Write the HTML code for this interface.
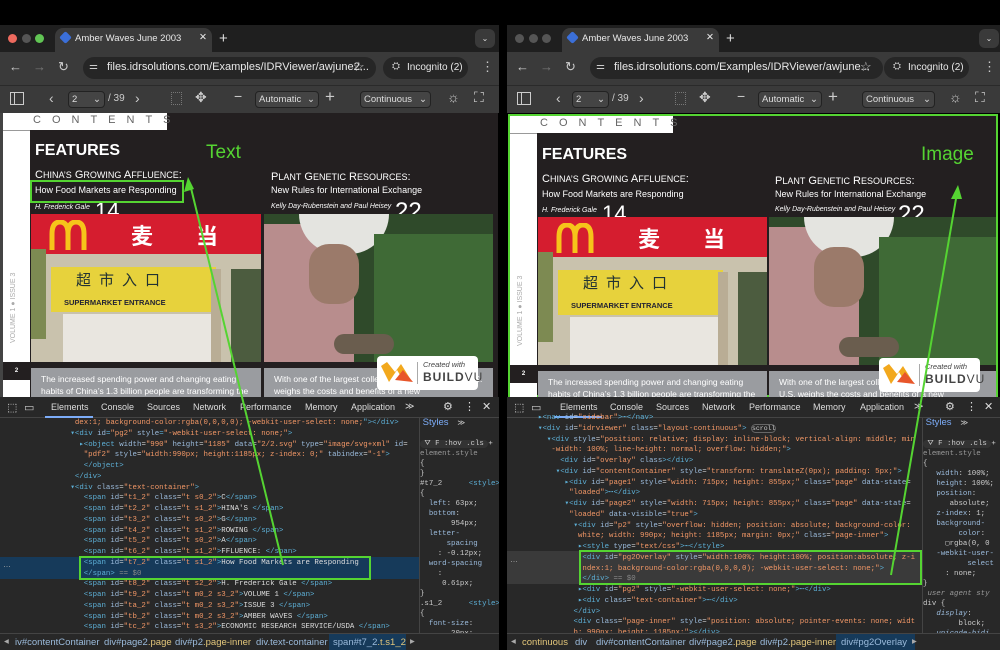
<!DOCTYPE html>
<html><head><meta charset="utf-8">
<style>
*{margin:0;padding:0;box-sizing:border-box}
body{width:1000px;height:650px;background:#000;position:relative;overflow:hidden;font-family:"Liberation Sans",sans-serif}
.p{position:absolute;top:0;height:650px;overflow:hidden}
.a{position:absolute}
.tabs{top:25px;left:0;width:500px;height:27px;background:#1f1f1f}
.tab{top:28px;left:55px;width:157px;height:24px;background:#3a3a3a;border-radius:8px 8px 0 0;color:#e8e8e8;font-size:9.5px;padding:5px 0 0 20px}
.addr{top:52px;left:0;width:500px;height:33px;background:#3a3a3a}
.url{top:57px;left:83px;width:293px;height:22px;background:#262626;border-radius:11px;color:#e8e8e8;font-size:11px;padding:4px 0 0 24px;white-space:nowrap;overflow:hidden}
.inc{top:57px;left:383px;width:85px;height:22px;background:#262626;border-radius:11px;color:#e8e8e8;font-size:10px;padding:5px 0 0 24px}
.tb{top:85px;left:0;width:500px;height:28px;background:#3a3a3a;border-top:1px solid #2a2a2a}
.sel{height:17px;background:#444;border:1px solid #222;border-radius:4px;color:#ddd;font-size:9.5px;padding:2px 0 0 3px}
.ic{color:#ccc;font-size:14px}
.page{top:113px;left:0;width:498px;height:284px;background:#231f20;border-left:3px solid #444}
.dt{top:397px;left:0;width:500px;height:253px;background:#282828}
.dtab{top:397px;left:0;width:500px;height:21px;background:#282828;border-bottom:1px solid #444;color:#ddd;font-size:9px}
.code{font-family:"Liberation Mono",monospace;font-size:7.4px;line-height:10.75px;white-space:pre;color:#ccc}
.t{color:#5db0d7}.n{color:#9bbbdc}.v{color:#f29766}.w{color:#ddd}
.sty{top:418px;left:419px;width:81px;height:215px;border-left:1px solid #444;background:#282828;font-family:"Liberation Mono",monospace;font-size:7.4px;line-height:10px;color:#ccc;white-space:pre;overflow:hidden}
.bc{top:633px;left:0;width:500px;height:17px;background:#282828;border-top:1px solid #444;color:#9bbbdc;font-size:9.5px;white-space:nowrap}
.gray{background:#9a9ca0;color:#fff;font-family:"Liberation Sans",sans-serif;font-size:8.5px;line-height:12px;padding:5px 10px}
</style></head><body>

<!-- ============ LEFT PANEL ============ -->
<div class="p" style="left:0;width:499px">
<div class="a tabs"></div>
<div class="a" style="top:34px;left:8px;width:9px;height:9px;border-radius:50%;background:#ed6a5e"></div>
<div class="a" style="top:34px;left:22px;width:9px;height:9px;border-radius:50%;background:#555"></div>
<div class="a" style="top:34px;left:35px;width:9px;height:9px;border-radius:50%;background:#61c554"></div>
<div class="a tab">Amber Waves June 2003<span style="position:absolute;left:144px;top:4px">✕</span></div>
<div class="a" style="top:33px;left:61px;width:9px;height:9px;background:#3b6fd8;border-radius:2px;transform:rotate(45deg)"></div>
<div class="a" style="top:30px;left:219px;color:#ddd;font-size:15px">+</div>
<div class="a" style="top:29px;left:475px;width:20px;height:19px;background:#3a3a3a;border-radius:6px;color:#ddd;font-size:8px;text-align:center;padding-top:5px">⌄</div>
<div class="a addr"></div>
<div class="a" style="top:59px;left:9px;color:#ccc;font-size:13px">←</div>
<div class="a" style="top:59px;left:33px;color:#777;font-size:13px">→</div>
<div class="a" style="top:59px;left:58px;color:#ccc;font-size:13px">↻</div>
<div class="a url">files.idrsolutions.com/Examples/IDRViewer/awjune2...</div>
<div class="a" style="top:61px;left:89px;color:#ccc;font-size:10px">⚌</div>
<div class="a" style="top:59px;left:353px;color:#ccc;font-size:13px">☆</div>
<div class="a inc">Incognito (2)</div>
<div class="a" style="top:61px;left:392px;color:#ccc;font-size:10px">⛭</div>
<div class="a" style="top:59px;left:481px;color:#ccc;font-size:13px">⋮</div>
<div class="a tb"></div>
<div class="a" style="top:92px;left:10px;width:14px;height:13px;border:1.5px solid #ccc"><div style="width:4px;height:100%;border-right:1.5px solid #ccc"></div></div>
<div class="a ic" style="top:90px;left:49px">‹</div>
<div class="a sel" style="top:91px;left:68px;width:37px">2<span style="float:right;margin-right:3px">⌄</span></div>
<div class="a" style="top:93px;left:108px;color:#ccc;font-size:10px">/ 39</div>
<div class="a ic" style="top:90px;left:135px">›</div>
<div class="a" style="top:92px;left:171px;width:11px;height:13px;border:1px dotted #777"></div>
<div class="a ic" style="top:89px;left:195px">✥</div>
<div class="a ic" style="top:88px;left:234px">−</div>
<div class="a sel" style="top:91px;left:255px;width:64px">Automatic<span style="float:right;margin-right:3px">⌄</span></div>
<div class="a ic" style="top:87px;left:325px;font-size:17px">+</div>
<div class="a sel" style="top:91px;left:360px;width:71px">Continuous<span style="float:right;margin-right:3px">⌄</span></div>
<div class="a ic" style="top:89px;left:447px">☼</div>
<div class="a ic" style="top:89px;left:474px">⛶</div>

<div class="a page">
 <div class="a" style="left:0;top:0;width:27px;height:284px;background:#fff"></div>
 <div class="a" style="left:27px;top:0;width:137px;height:17px;background:#fff;color:#666;font-size:11px;letter-spacing:11px;padding:1px 0 0 3px">CONTENTS</div>
 <div class="a" style="left:0;top:17px;width:27px;height:1px;background:#999"></div>
 <div class="a" style="left:32px;top:29px;color:#fff;font-weight:bold;font-size:16px">FEATURES</div>
 <div class="a" style="left:32px;top:56px;color:#fff;font-size:11px">C<span style="font-size:9px">HINA’S</span> G<span style="font-size:9px">ROWING</span> A<span style="font-size:9px">FFLUENCE</span>:</div>
 <div class="a" style="left:32px;top:72px;color:#fff;font-size:9px">How Food Markets are Responding</div>
 <div class="a" style="left:32px;top:91px;color:#fff;font-size:7px;font-style:italic">H. Frederick Gale</div>
 <div class="a" style="left:92px;top:85px;color:#fff;font-size:22px">14</div>
 <div class="a" style="left:268px;top:58px;color:#fff;font-size:11px">P<span style="font-size:9px">LANT</span> G<span style="font-size:9px">ENETIC</span> R<span style="font-size:9px">ESOURCES</span>:</div>
 <div class="a" style="left:268px;top:72px;color:#fff;font-size:9px">New Rules for International Exchange</div>
 <div class="a" style="left:268px;top:90px;color:#fff;font-size:7px;font-style:italic">Kelly Day-Rubenstein and Paul Heisey</div>
 <div class="a" style="left:392px;top:85px;color:#fff;font-size:24px">22</div>
 <div class="a" style="left:28px;top:101px;width:230px;height:148px;background:#c9c2ad;overflow:hidden">
  <div class="a" style="left:0;top:0;width:230px;height:40px;background:#d51d2f"></div>
  <svg class="a" style="left:18px;top:6px" width="40" height="30"><path d="M3,30 V14 Q3,2 11,2 Q19,2 19,14 V30 M19,14 Q19,2 27,2 Q35,2 35,14 V30" stroke="#f6c41a" stroke-width="5" fill="none"/></svg>
  <div class="a" style="left:100px;top:5px;color:#fff;font-size:22px;font-family:'Noto Sans CJK SC',sans-serif;font-weight:bold">麦</div>
  <div class="a" style="left:165px;top:5px;color:#fff;font-size:22px;font-family:'Noto Sans CJK SC',sans-serif;font-weight:bold">当</div>
  <div class="a" style="left:20px;top:53px;width:165px;height:45px;background:#e7d23c"></div>
  <div class="a" style="left:45px;top:55px;color:#233;font-size:15px;font-family:'Noto Sans CJK SC',sans-serif;letter-spacing:8px">超市入口</div>
  <div class="a" style="left:33px;top:84px;color:#223;font-size:7.5px;font-weight:bold">SUPERMARKET ENTRANCE</div>
  <div class="a" style="left:32px;top:100px;width:150px;height:48px;background:#e9e6e0"></div>
  <div class="a" style="left:180px;top:55px;width:10px;height:93px;background:#b9ad95"></div>
  <div class="a" style="left:200px;top:55px;width:30px;height:93px;background:#4c5c3f"></div>
  <div class="a" style="left:0;top:35px;width:15px;height:90px;background:#7d8a52"></div>
 </div>
 <div class="a" style="left:261px;top:101px;width:229px;height:148px;background:#2f4a2a;overflow:hidden">
  <div class="a" style="left:0;top:10px;width:90px;height:138px;background:#b88d8d"></div>
  <div class="a" style="left:35px;top:0;width:90px;height:40px;background:#e4e4e0;border-radius:0 0 40px 40px"></div>
  <div class="a" style="left:45px;top:30px;width:50px;height:60px;background:#9b7a6a;border-radius:20px"></div>
  <div class="a" style="left:110px;top:20px;width:119px;height:128px;background:#3f6a36"></div>
  <div class="a" style="left:70px;top:120px;width:60px;height:20px;background:#6a5d4e;border-radius:10px"></div>
 </div>
 <div class="a" style="left:27px;top:249px;width:463px;height:6px;background:#231f20"></div>
 <div class="a" style="left:0;top:249px;width:27px;height:18px;background:#231f20;color:#fff;font-size:6px;text-align:center;padding-top:6px;font-weight:bold">2</div>
 <div class="a" style="left:7px;top:230px;color:#aaa;font-size:7px;transform:rotate(-90deg);transform-origin:left top;white-space:nowrap">VOLUME 1 ● ISSUE 3</div>
 <div class="a gray" style="left:28px;top:255px;width:230px;height:29px">The increased spending power and changing eating habits of China’s 1.3 billion people are transforming the country’s</div>
 <div class="a gray" style="left:261px;top:255px;width:229px;height:29px">With one of the largest collections in the world, the U.S. weighs the costs and benefits of a new</div>
 <div class="a" style="left:374px;top:243px;width:101px;height:34px;background:#fff;border-radius:4px">
  <svg class="a" style="left:4px;top:6px" width="34" height="22"><polygon points="0,4 8,20 16,8 22,18 30,18 20,2 14,10 6,0" fill="#f2a81d"/><polygon points="14,18 22,8 32,20" fill="#e8562a"/></svg>
  <div class="a" style="left:40px;top:6px;width:1px;height:22px;background:#aaa"></div>
  <div class="a" style="left:46px;top:4px;font-size:7.5px;font-style:italic;color:#444">Created with</div>
  <div class="a" style="left:46px;top:14px;font-size:12px;font-weight:bold;color:#444;letter-spacing:1px">BUILD<span style="font-weight:normal">VU</span></div>
 </div>
 <div class="a" style="left:27px;top:67px;width:154px;height:23px;border:2px solid #55d432"></div>
 <div class="a" style="left:203px;top:29px;color:#55d432;font-size:19px">Text</div>
</div>

<div class="a dt"></div>
<div class="a dtab">
 <span class="a" style="left:7px;top:4px;font-size:11px;color:#ccc">⬚</span><span class="a" style="left:24px;top:4px;font-size:11px;color:#ccc">▭</span>
 <span class="a" style="left:51px;top:5px;color:#ddd">Elements</span><div class="a" style="left:45px;top:19px;width:48px;height:2px;background:#7cacf8"></div>
 <span class="a" style="left:101px;top:5px">Console</span><span class="a" style="left:147px;top:5px">Sources</span><span class="a" style="left:193px;top:5px">Network</span><span class="a" style="left:240px;top:5px">Performance</span><span class="a" style="left:305px;top:5px">Memory</span><span class="a" style="left:351px;top:5px">Application</span><span class="a" style="left:405px;top:4px">≫</span>
 <span class="a" style="left:443px;top:3px;font-size:11px">⚙</span><span class="a" style="left:464px;top:3px;font-size:11px">⋮</span><span class="a" style="left:482px;top:3px;font-size:11px">✕</span>
</div>
<div class="a" style="top:557px;left:0;width:419px;height:22px;background:#163a5a"></div>
<div class="a" style="top:560px;left:3px;color:#aaa;font-size:8px">…</div>
<div class="a code" style="top:418px;left:66px;width:353px;overflow:hidden">  <span class="v">dex:1; background-color:rgba(0,0,0,0); -webkit-user-select: none;</span><span class="t">"&gt;&lt;/div&gt;</span>
<span class="t"> ▾&lt;div </span><span class="n">id</span><span class="t">=</span><span class="v">"pg2"</span> <span class="n">style</span><span class="t">=</span><span class="v">"-webkit-user-select: none;"</span><span class="t">&gt;</span>
<span class="t">   ▸&lt;object </span><span class="n">width</span>=<span class="v">"990"</span> <span class="n">height</span>=<span class="v">"1185"</span> <span class="n">data</span>=<span class="v">"2/2.svg"</span> <span class="n">type</span>=<span class="v">"image/svg+xml"</span> <span class="n">id</span>=
<span class="v">    "pdf2"</span> <span class="n">style</span>=<span class="v">"width:990px; height:1185px; z-index: 0;"</span> <span class="n">tabindex</span>=<span class="v">"-1"</span><span class="t">&gt;</span>
<span class="t">    &lt;/object&gt;</span>
<span class="t">  &lt;/div&gt;</span>
<span class="t"> ▾&lt;div </span><span class="n">class</span>=<span class="v">"text-container"</span><span class="t">&gt;</span>
<span class="t">    &lt;span </span><span class="n">id</span>=<span class="v">"t1_2"</span> <span class="n">class</span>=<span class="v">"t s0_2"</span><span class="t">&gt;</span><span class="w">C</span><span class="t">&lt;/span&gt;</span>
<span class="t">    &lt;span </span><span class="n">id</span>=<span class="v">"t2_2"</span> <span class="n">class</span>=<span class="v">"t s1_2"</span><span class="t">&gt;</span><span class="w">HINA'S </span><span class="t">&lt;/span&gt;</span>
<span class="t">    &lt;span </span><span class="n">id</span>=<span class="v">"t3_2"</span> <span class="n">class</span>=<span class="v">"t s0_2"</span><span class="t">&gt;</span><span class="w">G</span><span class="t">&lt;/span&gt;</span>
<span class="t">    &lt;span </span><span class="n">id</span>=<span class="v">"t4_2"</span> <span class="n">class</span>=<span class="v">"t s1_2"</span><span class="t">&gt;</span><span class="w">ROWING </span><span class="t">&lt;/span&gt;</span>
<span class="t">    &lt;span </span><span class="n">id</span>=<span class="v">"t5_2"</span> <span class="n">class</span>=<span class="v">"t s0_2"</span><span class="t">&gt;</span><span class="w">A</span><span class="t">&lt;/span&gt;</span>
<span class="t">    &lt;span </span><span class="n">id</span>=<span class="v">"t6_2"</span> <span class="n">class</span>=<span class="v">"t s1_2"</span><span class="t">&gt;</span><span class="w">FFLUENCE: </span><span class="t">&lt;/span&gt;</span>
<span class="t">    &lt;span </span><span class="n">id</span>=<span class="v">"t7_2"</span> <span class="n">class</span>=<span class="v">"t s1_2"</span><span class="t">&gt;</span><span class="w">How Food Markets are Responding</span>
<span class="t">    &lt;/span&gt;</span><span style="color:#888"> == $0</span>
<span class="t">    &lt;span </span><span class="n">id</span>=<span class="v">"t8_2"</span> <span class="n">class</span>=<span class="v">"t s2_2"</span><span class="t">&gt;</span><span class="w">H. Frederick Gale </span><span class="t">&lt;/span&gt;</span>
<span class="t">    &lt;span </span><span class="n">id</span>=<span class="v">"t9_2"</span> <span class="n">class</span>=<span class="v">"t m0_2 s3_2"</span><span class="t">&gt;</span><span class="w">VOLUME 1 </span><span class="t">&lt;/span&gt;</span>
<span class="t">    &lt;span </span><span class="n">id</span>=<span class="v">"ta_2"</span> <span class="n">class</span>=<span class="v">"t m0_2 s3_2"</span><span class="t">&gt;</span><span class="w">ISSUE 3 </span><span class="t">&lt;/span&gt;</span>
<span class="t">    &lt;span </span><span class="n">id</span>=<span class="v">"tb_2"</span> <span class="n">class</span>=<span class="v">"t m0_2 s3_2"</span><span class="t">&gt;</span><span class="w">AMBER WAVES </span><span class="t">&lt;/span&gt;</span>
<span class="t">    &lt;span </span><span class="n">id</span>=<span class="v">"tc_2"</span> <span class="n">class</span>=<span class="v">"t s3_2"</span><span class="t">&gt;</span><span class="w">ECONOMIC RESEARCH SERVICE/USDA </span><span class="t">&lt;/span&gt;</span></div>
<div class="a" style="top:556px;left:79px;width:292px;height:24px;border:2px solid #55d432"></div>
<div class="a sty"><span style="color:#7cacf8;font-family:'Liberation Sans',sans-serif;font-size:9.5px"> Styles</span>  ≫

<span style="background:#333;border-radius:8px"> ⛛ F :hov .cls </span>+
<span style="color:#999">element.style</span>
{
}
#t7_2      <span class="t">&lt;style&gt;</span>
{
  <span class="n">left</span>: 63px;
  <span class="n">bottom</span>:
       954px;
  <span class="n">letter-</span>
      <span class="n">spacing</span>
    : -0.12px;
  <span class="n">word-spacing</span>
    :
     0.61px;
}
.s1_2      <span class="t">&lt;style&gt;</span>
{
  <span class="n">font-size</span>:
       20px;
  <span class="n">font-family</span>:
     GillSans_3i</div>
<div class="a bc"><span class="a" style="left:4px;top:2px;color:#aaa">◂</span><span class="a" style="left:15px;top:3px">iv#contentContainer</span><span class="a" style="left:104px;top:3px">div#page2<span style="color:#e2c67a">.page</span></span><span class="a" style="left:175px;top:3px">div#p2<span style="color:#e2c67a">.page-inner</span></span><span class="a" style="left:256px;top:3px">div.text-container</span><div class="a" style="left:329px;top:0;width:77px;height:17px;background:#163a5a"></div><span class="a" style="left:333px;top:3px">span#t7_2<span style="color:#e2c67a">.t.s1_2</span></span><span class="a" style="left:410px;top:2px;color:#aaa">▸</span></div>
</div>

<!-- ============ RIGHT PANEL ============ -->
<div class="p" style="left:507px;width:493px">
<div class="a tabs"></div>
<div class="a" style="top:34px;left:8px;width:9px;height:9px;border-radius:50%;background:#555"></div>
<div class="a" style="top:34px;left:22px;width:9px;height:9px;border-radius:50%;background:#555"></div>
<div class="a" style="top:34px;left:35px;width:9px;height:9px;border-radius:50%;background:#555"></div>
<div class="a tab">Amber Waves June 2003<span style="position:absolute;left:144px;top:4px">✕</span></div>
<div class="a" style="top:33px;left:61px;width:9px;height:9px;background:#3b6fd8;border-radius:2px;transform:rotate(45deg)"></div>
<div class="a" style="top:30px;left:219px;color:#ddd;font-size:15px">+</div>
<div class="a" style="top:29px;left:472px;width:20px;height:19px;background:#3a3a3a;border-radius:6px;color:#ddd;font-size:8px;text-align:center;padding-top:5px">⌄</div>
<div class="a addr"></div>
<div class="a" style="top:59px;left:9px;color:#ccc;font-size:13px">←</div>
<div class="a" style="top:59px;left:33px;color:#777;font-size:13px">→</div>
<div class="a" style="top:59px;left:58px;color:#ccc;font-size:13px">↻</div>
<div class="a url">files.idrsolutions.com/Examples/IDRViewer/awjune...</div>
<div class="a" style="top:61px;left:89px;color:#ccc;font-size:10px">⚌</div>
<div class="a" style="top:59px;left:353px;color:#ccc;font-size:13px">☆</div>
<div class="a inc" style="left:377px">Incognito (2)</div>
<div class="a" style="top:61px;left:386px;color:#ccc;font-size:10px">⛭</div>
<div class="a" style="top:59px;left:476px;color:#ccc;font-size:13px">⋮</div>
<div class="a tb"></div>
<div class="a" style="top:92px;left:10px;width:14px;height:13px;border:1.5px solid #ccc"><div style="width:4px;height:100%;border-right:1.5px solid #ccc"></div></div>
<div class="a ic" style="top:90px;left:49px">‹</div>
<div class="a sel" style="top:91px;left:65px;width:37px">2<span style="float:right;margin-right:3px">⌄</span></div>
<div class="a" style="top:93px;left:105px;color:#ccc;font-size:10px">/ 39</div>
<div class="a ic" style="top:90px;left:132px">›</div>
<div class="a" style="top:92px;left:168px;width:11px;height:13px;border:1px dotted #777"></div>
<div class="a ic" style="top:89px;left:192px">✥</div>
<div class="a ic" style="top:88px;left:230px">−</div>
<div class="a sel" style="top:91px;left:251px;width:64px">Automatic<span style="float:right;margin-right:3px">⌄</span></div>
<div class="a ic" style="top:87px;left:321px;font-size:17px">+</div>
<div class="a sel" style="top:91px;left:355px;width:73px">Continuous<span style="float:right;margin-right:3px">⌄</span></div>
<div class="a ic" style="top:89px;left:442px">☼</div>
<div class="a ic" style="top:89px;left:468px">⛶</div>

<div class="a page" style="left:1px;top:114px;width:490px;height:283px;border:2px solid #55d432">
 <div class="a" style="left:0;top:0;width:27px;height:284px;background:#fff"></div>
 <div class="a" style="left:27px;top:0;width:136px;height:17px;background:#fff;color:#666;font-size:11px;letter-spacing:11px;padding:1px 0 0 3px">CONTENTS</div>
 <div class="a" style="left:0;top:17px;width:27px;height:1px;background:#999"></div>
 <div class="a" style="left:32px;top:30px;color:#fff;font-weight:bold;font-size:16px">FEATURES</div>
 <div class="a" style="left:32px;top:57px;color:#fff;font-size:11px">C<span style="font-size:9px">HINA’S</span> G<span style="font-size:9px">ROWING</span> A<span style="font-size:9px">FFLUENCE</span>:</div>
 <div class="a" style="left:32px;top:73px;color:#fff;font-size:9px">How Food Markets are Responding</div>
 <div class="a" style="left:32px;top:91px;color:#fff;font-size:7px;font-style:italic">H. Frederick Gale</div>
 <div class="a" style="left:92px;top:85px;color:#fff;font-size:22px">14</div>
 <div class="a" style="left:265px;top:59px;color:#fff;font-size:11px">P<span style="font-size:9px">LANT</span> G<span style="font-size:9px">ENETIC</span> R<span style="font-size:9px">ESOURCES</span>:</div>
 <div class="a" style="left:265px;top:73px;color:#fff;font-size:9px">New Rules for International Exchange</div>
 <div class="a" style="left:265px;top:90px;color:#fff;font-size:7px;font-style:italic">Kelly Day-Rubenstein and Paul Heisey</div>
 <div class="a" style="left:388px;top:85px;color:#fff;font-size:24px">22</div>
 <div class="a" style="left:28px;top:101px;width:229px;height:148px;background:#c9c2ad;overflow:hidden">
  <div class="a" style="left:0;top:0;width:230px;height:40px;background:#d51d2f"></div>
  <svg class="a" style="left:18px;top:6px" width="40" height="30"><path d="M3,30 V14 Q3,2 11,2 Q19,2 19,14 V30 M19,14 Q19,2 27,2 Q35,2 35,14 V30" stroke="#f6c41a" stroke-width="5" fill="none"/></svg>
  <div class="a" style="left:100px;top:5px;color:#fff;font-size:22px;font-family:'Noto Sans CJK SC',sans-serif;font-weight:bold">麦</div>
  <div class="a" style="left:165px;top:5px;color:#fff;font-size:22px;font-family:'Noto Sans CJK SC',sans-serif;font-weight:bold">当</div>
  <div class="a" style="left:20px;top:53px;width:165px;height:45px;background:#e7d23c"></div>
  <div class="a" style="left:45px;top:55px;color:#233;font-size:15px;font-family:'Noto Sans CJK SC',sans-serif;letter-spacing:8px">超市入口</div>
  <div class="a" style="left:33px;top:84px;color:#223;font-size:7.5px;font-weight:bold">SUPERMARKET ENTRANCE</div>
  <div class="a" style="left:32px;top:100px;width:150px;height:48px;background:#e9e6e0"></div>
  <div class="a" style="left:180px;top:55px;width:10px;height:93px;background:#b9ad95"></div>
  <div class="a" style="left:200px;top:55px;width:30px;height:93px;background:#4c5c3f"></div>
  <div class="a" style="left:0;top:35px;width:15px;height:90px;background:#7d8a52"></div>
 </div>
 <div class="a" style="left:259px;top:101px;width:227px;height:148px;background:#2f4a2a;overflow:hidden">
  <div class="a" style="left:0;top:10px;width:90px;height:138px;background:#b88d8d"></div>
  <div class="a" style="left:35px;top:0;width:90px;height:40px;background:#e4e4e0;border-radius:0 0 40px 40px"></div>
  <div class="a" style="left:45px;top:30px;width:50px;height:60px;background:#9b7a6a;border-radius:20px"></div>
  <div class="a" style="left:110px;top:20px;width:119px;height:128px;background:#3f6a36"></div>
  <div class="a" style="left:70px;top:120px;width:60px;height:20px;background:#6a5d4e;border-radius:10px"></div>
 </div>
 <div class="a" style="left:0;top:249px;width:27px;height:18px;background:#231f20;color:#fff;font-size:6px;text-align:center;padding-top:6px;font-weight:bold">2</div>
 <div class="a" style="left:7px;top:230px;color:#aaa;font-size:7px;transform:rotate(-90deg);transform-origin:left top;white-space:nowrap">VOLUME 1 ● ISSUE 3</div>
 <div class="a gray" style="left:28px;top:255px;width:229px;height:29px">The increased spending power and changing eating habits of China’s 1.3 billion people are transforming the country’s</div>
 <div class="a gray" style="left:259px;top:255px;width:227px;height:29px">With one of the largest collections in the world, the U.S. weighs the costs and benefits of a new</div>
 <div class="a" style="left:369px;top:242px;width:101px;height:34px;background:#fff;border-radius:4px">
  <svg class="a" style="left:4px;top:6px" width="34" height="22"><polygon points="0,4 8,20 16,8 22,18 30,18 20,2 14,10 6,0" fill="#f2a81d"/><polygon points="14,18 22,8 32,20" fill="#e8562a"/></svg>
  <div class="a" style="left:40px;top:6px;width:1px;height:22px;background:#aaa"></div>
  <div class="a" style="left:46px;top:4px;font-size:7.5px;font-style:italic;color:#444">Created with</div>
  <div class="a" style="left:46px;top:14px;font-size:12px;font-weight:bold;color:#444;letter-spacing:1px">BUILD<span style="font-weight:normal">VU</span></div>
 </div>
 <div class="a" style="left:411px;top:28px;color:#55d432;font-size:19px">Image</div>
</div>

<div class="a dt"></div>
<div class="a dtab">
 <span class="a" style="left:7px;top:4px;font-size:11px;color:#ccc">⬚</span><span class="a" style="left:24px;top:4px;font-size:11px;color:#ccc">▭</span>
 <span class="a" style="left:53px;top:5px;color:#ddd">Elements</span><div class="a" style="left:47px;top:19px;width:48px;height:2px;background:#7cacf8"></div>
 <span class="a" style="left:103px;top:5px">Console</span><span class="a" style="left:149px;top:5px">Sources</span><span class="a" style="left:195px;top:5px">Network</span><span class="a" style="left:242px;top:5px">Performance</span><span class="a" style="left:306px;top:5px">Memory</span><span class="a" style="left:353px;top:5px">Application</span><span class="a" style="left:407px;top:4px">≫</span>
 <span class="a" style="left:438px;top:3px;font-size:11px">⚙</span><span class="a" style="left:459px;top:3px;font-size:11px">⋮</span><span class="a" style="left:477px;top:3px;font-size:11px">✕</span>
</div>
<div class="a" style="top:551px;left:0;width:414px;height:33px;background:#3a3a3a"></div>
<div class="a" style="top:555px;left:3px;color:#aaa;font-size:8px">…</div>
<div class="a code" style="top:413px;left:0;width:414px;overflow:hidden"><span class="t">       ▸&lt;nav </span><span class="n">id</span>=<span class="v">"sidebar"</span><span class="t">&gt;⋯&lt;/nav&gt;</span>
<span class="t">       ▾&lt;div </span><span class="n">id</span>=<span class="v">"idrviewer"</span> <span class="n">class</span>=<span class="v">"layout-continuous"</span><span class="t">&gt;</span> <span style="border:1px solid #666;border-radius:6px;color:#ccc;font-size:6.5px">scroll</span>
<span class="t">         ▾&lt;div </span><span class="n">style</span>=<span class="v">"position: relative; display: inline-block; vertical-align: middle; min</span>
<span class="v">          -width: 100%; line-height: normal; overflow: hidden;"</span><span class="t">&gt;</span>
<span class="t">            &lt;div </span><span class="n">id</span>=<span class="v">"overlay"</span> <span class="n">class</span><span class="t">&gt;&lt;/div&gt;</span>
<span class="t">           ▾&lt;div </span><span class="n">id</span>=<span class="v">"contentContainer"</span> <span class="n">style</span>=<span class="v">"transform: translateZ(0px); padding: 5px;"</span><span class="t">&gt;</span>
<span class="t">             ▸&lt;div </span><span class="n">id</span>=<span class="v">"page1"</span> <span class="n">style</span>=<span class="v">"width: 715px; height: 855px;"</span> <span class="n">class</span>=<span class="v">"page"</span> <span class="n">data-state</span>=
<span class="v">              "loaded"</span><span class="t">&gt;⋯&lt;/div&gt;</span>
<span class="t">             ▾&lt;div </span><span class="n">id</span>=<span class="v">"page2"</span> <span class="n">style</span>=<span class="v">"width: 715px; height: 855px;"</span> <span class="n">class</span>=<span class="v">"page"</span> <span class="n">data-state</span>=
<span class="v">              "loaded"</span> <span class="n">data-visible</span>=<span class="v">"true"</span><span class="t">&gt;</span>
<span class="t">               ▾&lt;div </span><span class="n">id</span>=<span class="v">"p2"</span> <span class="n">style</span>=<span class="v">"overflow: hidden; position: absolute; background-color:</span>
<span class="v">                white; width: 990px; height: 1185px; margin: 0px;"</span> <span class="n">class</span>=<span class="v">"page-inner"</span><span class="t">&gt;</span>
<span class="t">                ▸&lt;style </span><span class="n">type</span>=<span class="v">"text/css"</span><span class="t">&gt;⋯&lt;/style&gt;</span>
<span class="t">                 &lt;div </span><span class="n">id</span>=<span class="v">"pg2Overlay"</span> <span class="n">style</span>=<span class="v">"width:100%; height:100%; position:absolute; z-i</span>
<span class="v">                 ndex:1; background-color:rgba(0,0,0,0); -webkit-user-select: none;"</span><span class="t">&gt;</span>
<span class="t">                 &lt;/div&gt;</span><span style="color:#888"> == $0</span>
<span class="t">                ▸&lt;div </span><span class="n">id</span>=<span class="v">"pg2"</span> <span class="n">style</span>=<span class="v">"-webkit-user-select: none;"</span><span class="t">&gt;⋯&lt;/div&gt;</span>
<span class="t">                ▸&lt;div </span><span class="n">class</span>=<span class="v">"text-container"</span><span class="t">&gt;⋯&lt;/div&gt;</span>
<span class="t">               &lt;/div&gt;</span>
<span class="t">               &lt;div </span><span class="n">class</span>=<span class="v">"page-inner"</span> <span class="n">style</span>=<span class="v">"position: absolute; pointer-events: none; widt</span>
<span class="v">               h: 990px; height: 1185px;"</span><span class="t">&gt;&lt;/div&gt;</span></div>
<div class="a" style="top:550px;left:72px;width:343px;height:35px;border:2px solid #55d432"></div>
<div class="a sty" style="left:415px;width:78px"><span style="color:#7cacf8;font-family:'Liberation Sans',sans-serif;font-size:9.5px"> Styles</span>  ≫

<span style="background:#333;border-radius:8px"> ⛛ F :hov .cls </span>+
<span style="color:#999">element.style</span>
{
   <span class="n">width</span>: 100%;
   <span class="n">height</span>: 100%;
   <span class="n">position</span>:
      absolute;
   <span class="n">z-index</span>: 1;
   <span class="n">background-</span>
        <span class="n">color</span>:
     ▢rgba(0, 0
   <span class="n">-webkit-user-</span>
          <span class="n">select</span>
     : none;
}
 <span style="color:#999;font-style:italic">user agent sty</span>
div {
   <span class="n" style="font-style:italic">display</span>:
        block;
   <span class="n" style="font-style:italic">unicode-bidi</span>
       :
     isolate;</div>
<div class="a bc"><span class="a" style="left:4px;top:2px;color:#aaa">◂</span><span class="a" style="left:15px;top:3px;color:#e2c67a">continuous</span><span class="a" style="left:68px;top:3px">div</span><span class="a" style="left:89px;top:3px">div#contentContainer</span><span class="a" style="left:182px;top:3px">div#page2<span style="color:#e2c67a">.page</span></span><span class="a" style="left:253px;top:3px">div#p2<span style="color:#e2c67a">.page-inner</span></span><div class="a" style="left:329px;top:0;width:79px;height:17px;background:#163a5a"></div><span class="a" style="left:334px;top:3px">div#pg2Overlay</span><span class="a" style="left:405px;top:2px;color:#aaa">▸</span></div>
</div>

<div class="a" style="left:499px;top:25px;width:8px;height:625px;background:#000"></div>

<svg class="a" style="left:0;top:0" width="1000" height="650">
 <line x1="283" y1="565" x2="190" y2="184" stroke="#55d432" stroke-width="2"/>
 <polygon points="188,177 184,192 194,189" fill="#55d432"/>
 <line x1="891" y1="575" x2="957" y2="193" stroke="#55d432" stroke-width="2"/>
 <polygon points="958,185 951,199 962,199" fill="#55d432"/>
</svg>
</body></html>
